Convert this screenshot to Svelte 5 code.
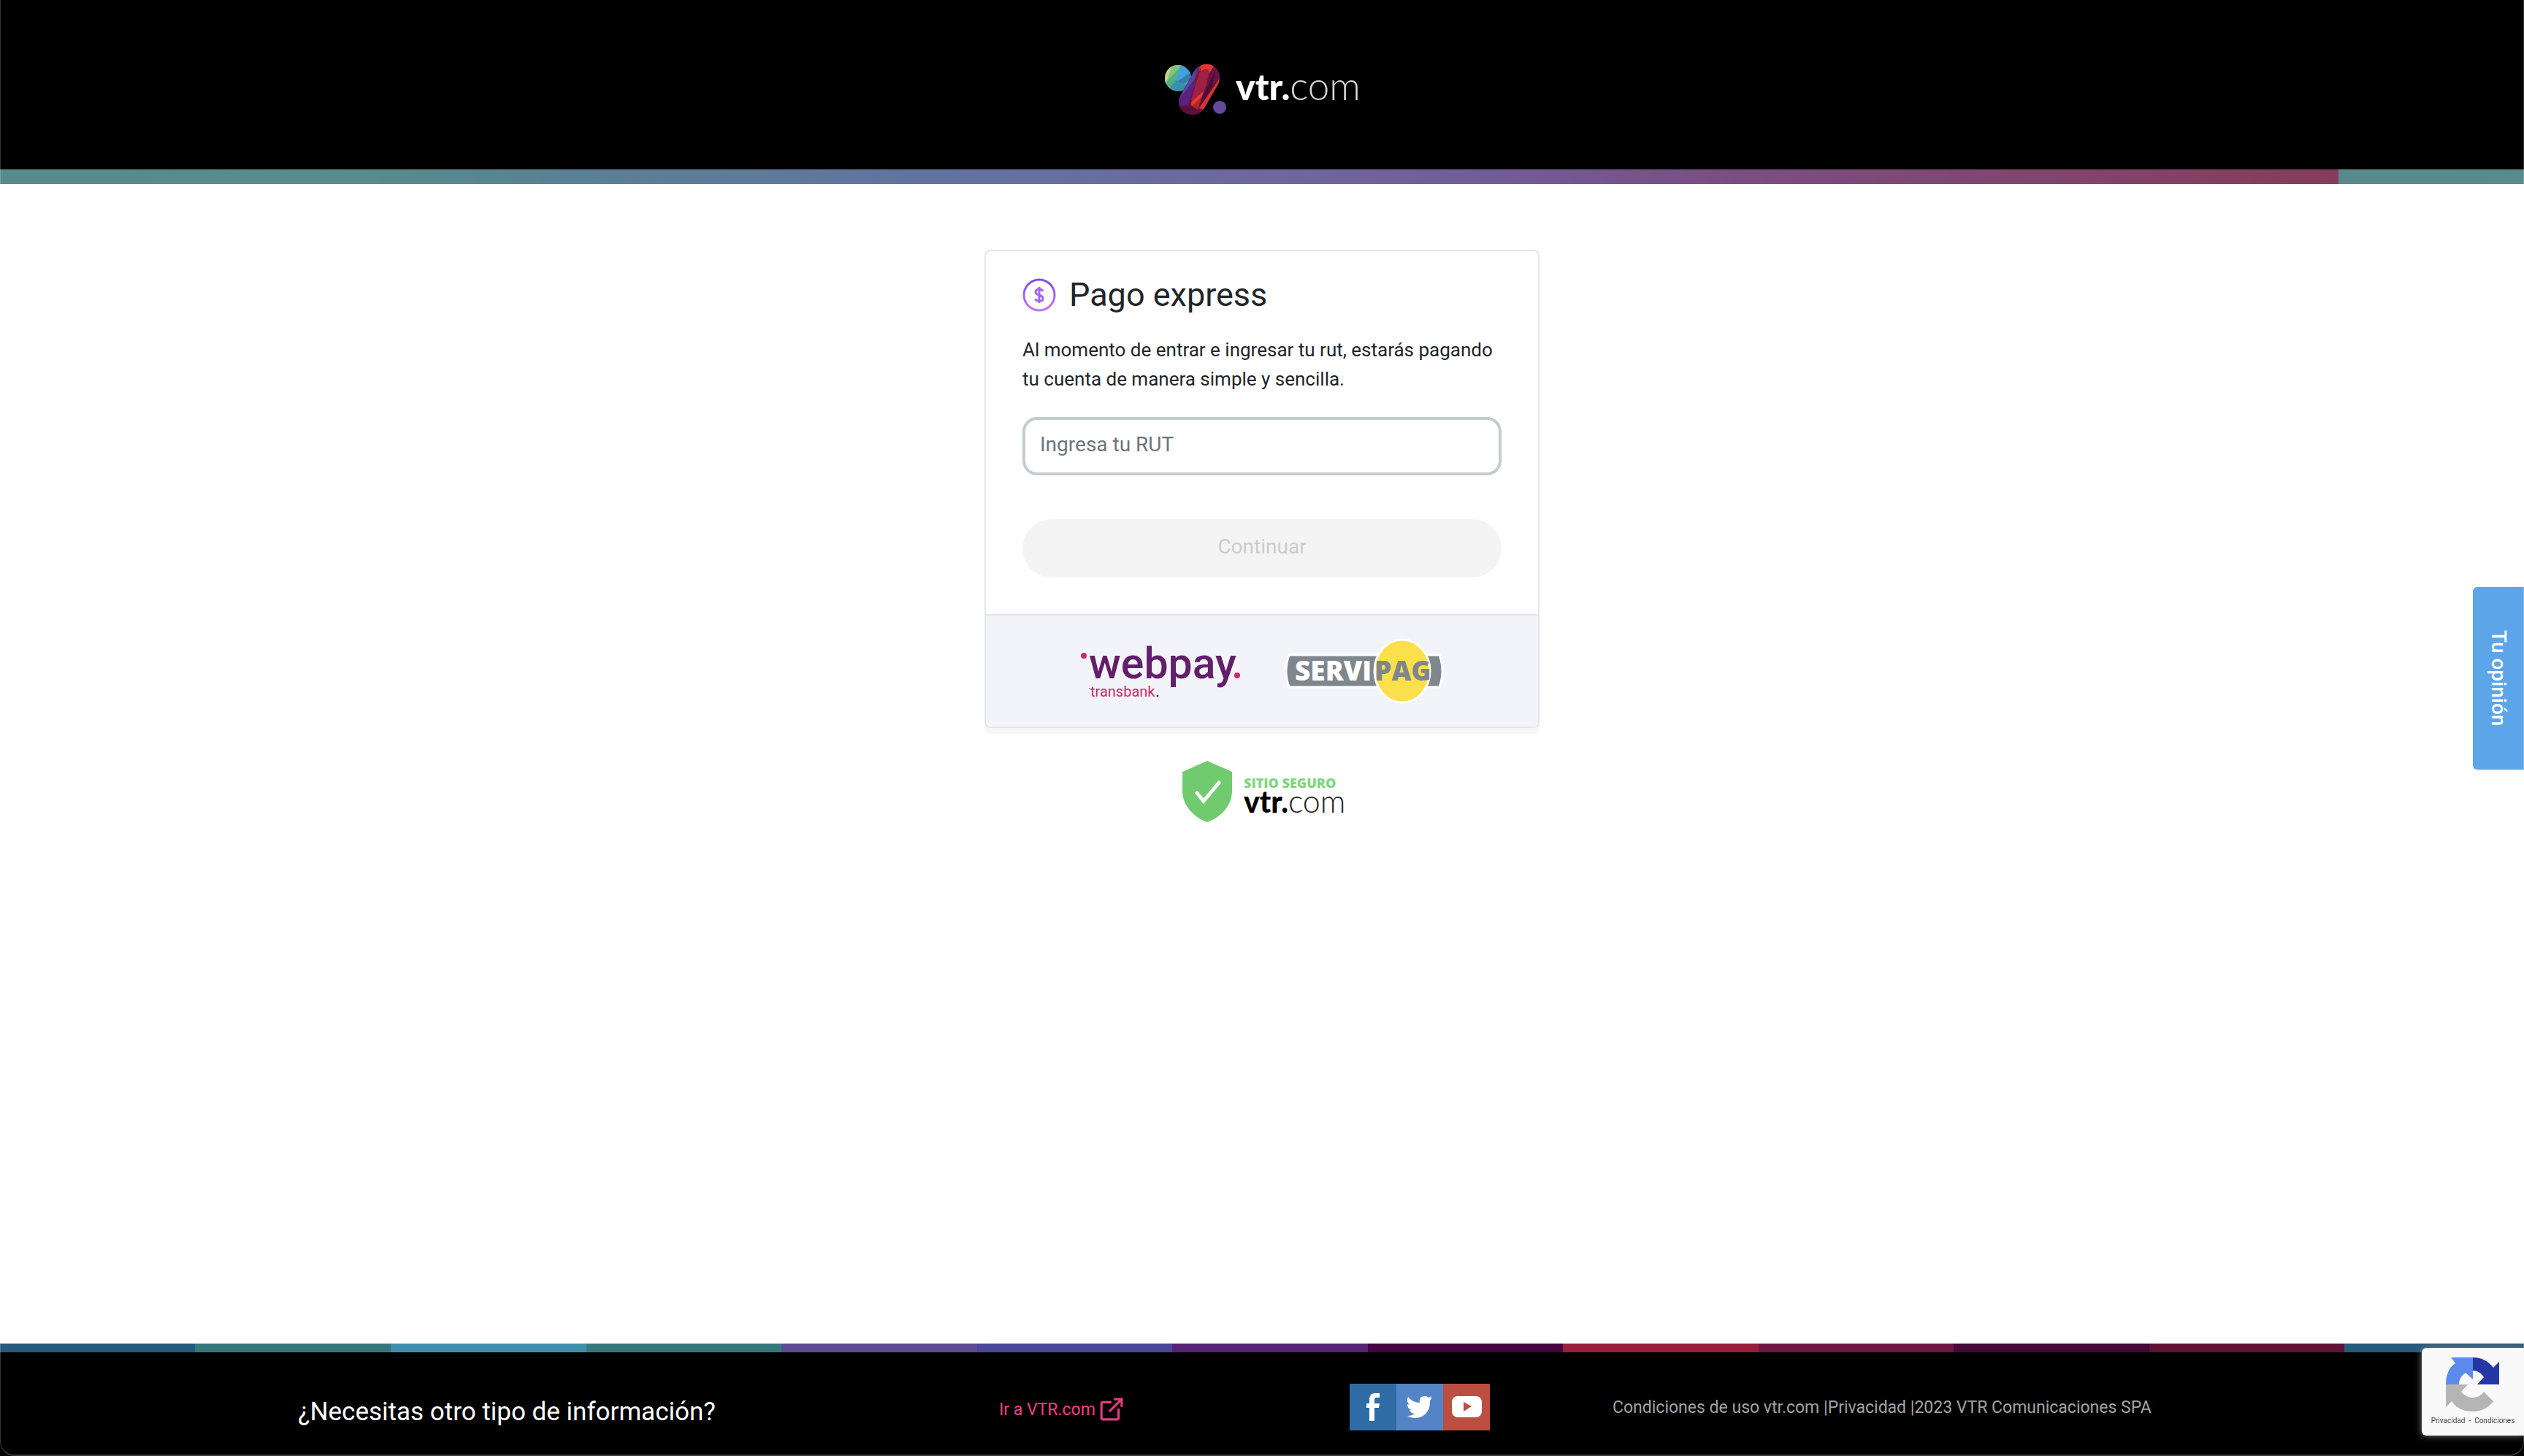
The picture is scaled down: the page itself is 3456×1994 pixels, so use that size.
<script>
  let rut = $state('');
</script>

<svelte:head>
  <title>Pago express</title>
</svelte:head>

<div class="page">
  <header>
    <a class="logo" href="#inicio" aria-label="vtr.com">
      <svg width="268" height="90" viewBox="0 -10 268 90" aria-hidden="true">
        <defs>
          <clipPath id="ball"><circle cx="19" cy="19" r="18" /></clipPath>
          <clipPath id="pill"><path d="M22 43 41 10C46 1 54 0 59 0 72 0 80 14 74 27L55 60C51 67 44 69 38 69 25 69 16 56 22 43Z" /></clipPath>
        </defs>
        <g clip-path="url(#ball)">
          <rect width="38" height="38" fill="#4a9fb0" />
          <path d="M0 30V5L12 0 3 28Z" fill="#c3d67e" />
          <path d="M3 24 12 0H24L11 22Z" fill="#7dc383" />
          <path d="M3 24 24 2 14 28 6 34Z" fill="#58ad82" />
          <path d="M24 0 36 12 16 24Z" fill="#429fe0" />
          <path d="M12 28 38 10V19L14 36Z" fill="#347fa3" />
          <path d="M16 22 34 30 20 38 8 32Z" fill="#3b8fae" />
        </g>
        <g clip-path="url(#pill)">
          <rect x="15" width="65" height="70" fill="#6b1245" />
          <path d="M15 50 46 0H54L26 70H15Z" fill="#5a227f" />
          <path d="M30 20 46 0 42 20 24 44Z" fill="#5146a0" />
          <path d="M44 18 50 0H70L62 12Z" fill="#e0392f" />
          <path d="M42 20 50 4 50 20 44 32Z" fill="#7c1a1c" />
          <path d="M37 48 48 12C54 4 62 6 62 12L54 40 38 52Z" fill="#a02044" />
          <path d="M50 50 70 8 66 30 52 54Z" fill="#4c0d35" />
          <path d="M66 34 78 16V26L54 62 48 60Z" fill="#d9352d" />
          <path d="M36 56 52 44 46 62 38 62Z" fill="#b5261f" />
          <path d="M37 52 54 37 52 44 38 57Z" fill="#e23d30" />
          <path d="M18 58 36 56 52 66 40 70H22Z" fill="#5b0f3c" />
        </g>
        <circle cx="76" cy="59" r="9" fill="#654a9b" />
        <text class="heavy" x="98" y="49" font-size="50" fill="#fff">vtr.<tspan class="thin" font-size="53" fill="#d8d8d8">com</tspan></text>
      </svg>
    </a>
  </header>
  <div class="rainbow"></div>

  <main>
    <section class="card">
      <form class="body" onsubmit={(e) => e.preventDefault()}>
        <h1>
          <svg width="46" height="46" viewBox="0 0 46 46" fill="none" aria-hidden="true">
            <defs>
              <linearGradient id="coin" x1="0" y1="0" x2="0" y2="1">
                <stop offset="0" stop-color="#7a4df8" />
                <stop offset="1" stop-color="#c777f0" />
              </linearGradient>
            </defs>
            <circle cx="23" cy="23" r="21" stroke="url(#coin)" stroke-width="3" />
            <path d="M23 12V34M28 18C27 15 25 15 23 15 20 15 18 16 18 19S20 22 23 23 28 25 28 28 26 31 23 31 18 30 18 28" stroke="#a066f3" stroke-width="3" />
          </svg>
          <span>Pago express</span>
        </h1>
        <p>Al momento de entrar e ingresar tu rut, estarás pagando tu cuenta de manera simple y sencilla.</p>
        <input type="text" aria-label="Ingresa tu RUT" placeholder="Ingresa tu RUT" bind:value={rut} />
        <button class="continue" disabled={rut.length === 0}>Continuar</button>
      </form>

      <div class="methods">
        <svg width="220" height="106" viewBox="0 -10 220 106" role="img" aria-label="webpay transbank">
          <circle cx="4" cy="22" r="4" fill="#c92b6c" />
          <text class="word strong" x="11" y="53" font-size="59" fill="#621f6a">webpay</text>
          <circle cx="214" cy="49" r="4" fill="#c92b6c" />
          <circle cx="12" cy="67" r="1" fill="#3aa5d8" />
          <text class="word" x="13" y="78" font-size="20" fill="#c92b6c">transbank</text>
          <circle cx="105" cy="77" r="1.5" fill="#621f6a" />
        </svg>
        <svg width="216" height="90" viewBox="0 0 216 90" role="img" aria-label="Servipag">
          <path d="M5 23H211Q219 45 211 67H5Q-3 45 5 23Z" fill="#80878c" stroke="#fff" stroke-width="3" />
          <ellipse cx="160" cy="45" rx="38" ry="43" fill="#fbdf4b" stroke="#fff" stroke-width="3" />
          <text class="bold" x="13" y="58" font-size="37" fill="#fff">SERVI</text>
          <text class="bold" x="122" y="58" font-size="37" fill="#80878c">PAG</text>
        </svg>
      </div>
    </section>

    <svg class="secure" width="230" height="86" viewBox="-5 0 230 86" role="img" aria-label="Sitio seguro vtr.com">
      <path d="M35 1 69 16V42C69 62 54 78 35 85 16 78 1 62 1 42V16Z" fill="#70cb6f" />
      <path d="M21 45 30 56 51 31" fill="none" stroke="#fff" stroke-width="5" stroke-linecap="round" />
      <text class="bold" x="85" y="38" font-size="18" fill="#7fd67e">SITIO SEGURO</text>
      <text class="heavy" x="85" y="72" font-size="41" fill="#000">vtr.<tspan class="thin" font-size="43" fill="#222">com</tspan></text>
    </svg>
  </main>

  <footer>
    <h2>¿Necesitas otro tipo de información?</h2>
    <a class="go" href="#vtr">
      Ir a VTR.com
      <svg width="32" height="32" viewBox="0 0 30 30" fill="none" stroke="#e03c80" stroke-width="3" aria-hidden="true">
        <path d="M15 6H4Q2 6 2 8V26Q2 28 4 28H22Q24 28 24 26V14M12 18 28 2M18 2H28V12" />
      </svg>
    </a>
    <nav class="social" aria-label="Redes sociales">
      <a class="fb" href="#facebook" aria-label="Facebook">
        <svg viewBox="0 0 64 64" aria-hidden="true"><path d="M27 51V33H23V27H27V22C27 16 30 13 35 13H41V19H37C34 19 34 21 34 23V27H41L40 33H34V51Z" fill="#fff" /></svg>
      </a>
      <a class="tw" href="#twitter" aria-label="Twitter">
        <svg viewBox="0 0 64 64" aria-hidden="true"><path d="M49 19 46 23C47 38 37 47 26 47 22 47 18 46 15 44 19 44 23 43 25 41 22 41 19 39 18 36H21C17 35 15 32 15 28L18 29C15 26 14 22 16 18 20 23 26 26 32 26 31 20 34 17 38 17 40 17 42 17 44 19L48 17 46 20Z" fill="#fff" /></svg>
      </a>
      <a class="yt" href="#youtube" aria-label="YouTube">
        <svg viewBox="0 0 64 64" aria-hidden="true"><rect x="12" y="17" width="41" height="29" rx="8" fill="#fff" /><path d="M28 25V38L39 31Z" fill="#bb4f41" /></svg>
      </a>
    </nav>
    <p class="legal"><a href="#condiciones">Condiciones de uso vtr.com</a> |<a href="#privacidad">Privacidad</a> |2023 VTR Comunicaciones SPA</p>
  </footer>
</div>

<button class="opinion">Tu opinión</button>

<aside class="captcha">
  <svg width="76" height="76" viewBox="0 0 76 76" aria-hidden="true">
    <path d="M1 38C1 24 6 14 14 9L8 1H38V31L28 22C22 26 19 31 19 38Z" fill="#5b8cec" />
    <path d="M38 1C50 1 59 6 66 15L74 7V38H44L53 28C49 22 44 19 38 19Z" fill="#2438a5" />
    <path d="M1 38H31L22 48C26 53 31 56 38 56 44 56 50 53 53 48L66 61C59 70 50 75 38 75 26 75 16 71 9 61L1 69Z" fill="#b5b5b5" />
  </svg>
  <div class="terms"><a href="#privacidad-google">Privacidad</a><span>-</span><a href="#condiciones-google">Condiciones</a></div>
</aside>
<div class="frame"></div>

<style>
  :global(body) {
    background: #000;
    font-family: Roboto, 'Open Sans', sans-serif;
    color: #212529;
  }

  .page {
    display: flex;
    flex-direction: column;
    min-height: 100vh;
    background: #fff;
  }

  a { color: inherit; text-decoration: none; }

  header {
    display: flex;
    justify-content: center;
    padding: 78px 0 64px;
    background: #000;
  }

  .logo svg { display: block; }

  .heavy { font-family: Lato, sans-serif; font-weight: 900; }
  .thin { font-family: Lato, sans-serif; font-weight: 300; }
  .bold { font-family: 'Open Sans', sans-serif; font-weight: 800; }
  .word { font-family: Roboto, sans-serif; font-weight: 400; }
  .strong { font-weight: 500; }

  .rainbow {
    height: 20px;
    background: linear-gradient(90deg, #58898c 0, #588c8c 15%, #5a8095 25%, #6471a0 43%, #70659d 56%, #725c96 64%, #7b4d80 75%, #80456d 88%, #863c5b 100%) 0 0 / 3202px 100% repeat-x;
  }

  main {
    flex: 1;
    display: flex;
    flex-direction: column;
    align-items: center;
    padding: 90px 24px;
  }

  .card {
    box-sizing: border-box;
    width: 100%;
    max-width: 760px;
    border: 2px solid #e4e5e6;
    border-radius: 8px;
    box-shadow: 0 8px 0 #f6f6f6;
    overflow: hidden;
  }

  .body { padding: 32px 50px 50px; }

  h1 {
    display: flex;
    align-items: center;
    gap: 18px;
    margin: 0;
    font-size: 45px;
    line-height: 56px;
    font-weight: 400;
  }

  .body p {
    margin: 27px 0 32px;
    font-size: 26px;
    line-height: 40px;
  }

  input, .continue {
    display: block;
    box-sizing: border-box;
    width: 100%;
    height: 80px;
    font: inherit;
    font-size: 28px;
  }

  input {
    padding: 0 20px 6px;
    border: 4px solid #c5cccf;
    border-radius: 20px;
    background: #fff;
  }

  input::placeholder { color: #6c757d; opacity: 1; }

  .continue {
    margin-top: 60px;
    padding: 0 0 6px;
    border: 0;
    border-radius: 40px;
    background: #f4f4f4;
    color: #ccc;
  }

  .methods {
    display: flex;
    justify-content: center;
    align-items: center;
    gap: 60px;
    height: 152px;
    border-top: 2px solid #e4e5e6;
    background: #f3f4f9;
  }

  .secure { margin-top: 44px; }

  footer {
    display: grid;
    grid-template-columns: 1368px 480px 360px 1fr;
    align-items: center;
    box-sizing: border-box;
    height: 154px;
    padding: 20px 0 0;
    background:
      linear-gradient(90deg, #255a7b 0 267px, #35797f 0 535px, #3f8eac 0 803px, #35797f 0 1070px, #614a94 0 1338px, #48479a 0 1605px, #552274 0 1873px, #440640 0 2140px, #991f3d 0 2408px, #6f1645 0 2675px, #440a38 0 2943px, #5f1236 0 3210px) 0 0 / 3210px 12px repeat-x,
      #000;
    color: #fff;
  }

  h2 {
    margin: 14px 0 0;
    padding-left: 408px;
    font-size: 35px;
    line-height: 40px;
    font-weight: 400;
  }

  .go {
    display: flex;
    align-items: center;
    gap: 6px;
    padding-top: 6px;
    font-size: 23px;
    color: #ee4085;
  }

  .social { display: flex; }
  .social a { width: 64px; height: 64px; }
  .social svg { display: block; }
  .fb { background: #2f6ca5; }
  .tw { background: #5484c8; }
  .yt { background: #bb4f41; }

  .legal { margin: 0; font-size: 23px; color: #a3a3a3; }

  .opinion {
    position: fixed;
    right: 0;
    top: 804px;
    width: 70px;
    height: 250px;
    padding: 0;
    border: 0;
    border-radius: 6px 0 0 6px;
    background: #5da5e9;
    color: #fff;
    font: inherit;
    font-size: 28px;
    font-weight: 500;
    writing-mode: vertical-rl;
  }

  .captcha {
    position: fixed;
    right: 0;
    bottom: 28px;
    box-sizing: border-box;
    width: 140px;
    height: 120px;
    padding-top: 12px;
    border-radius: 6px 0 0 6px;
    background: #f9f9f9;
    box-shadow: 0 0 10px #808080;
    color: #444;
    font-size: 10px;
    line-height: 24px;
  }

  .captcha svg { display: block; margin: 0 auto; }

  .terms { display: flex; justify-content: center; gap: 5px; }

  .frame {
    position: fixed;
    inset: 0;
    border: 1px solid rgba(255, 255, 255, 0.22);
    border-width: 0 1px 2px;
    border-radius: 0 0 20px 20px;
    pointer-events: none;
  }
</style>
